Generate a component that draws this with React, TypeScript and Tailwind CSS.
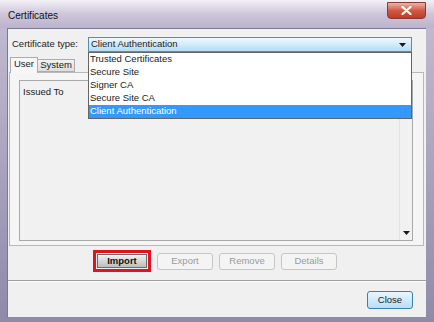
import React from 'react';

const font = { fontFamily: '"Liberation Sans", Arial, sans-serif' };

const certTypes = ['Trusted Certificates', 'Secure Site', 'Signer CA', 'Secure Site CA', 'Client Authentication'];

const DownArrow: React.FC<{ className?: string }> = ({ className }) => (
  <svg width="7" height="4" viewBox="0 0 7 4" className={className}>
    <path d="M0 0 H7 L3.5 4 Z" fill="#1a1a1a" />
  </svg>
);

interface BtnProps {
  label: string;
  disabled?: boolean;
}

const WinButton: React.FC<BtnProps> = ({ label, disabled }) => (
  <div
    className={
      disabled
        ? 'flex h-[17px] w-[56px] items-center justify-center rounded-[3px] border border-[#c4c6c8] bg-[#f4f4f4] text-[#9a9a9a]'
        : 'flex h-[17px] w-[56px] items-center justify-center rounded-[3px] border border-[#707070] bg-gradient-to-b from-[#f2f2f2] to-[#d2d2d2] text-[#111]'
    }
  >
    {label}
  </div>
);

const App: React.FC = () => {
  return (
    <div
      className="flex h-[322px] w-[434px] flex-col overflow-hidden bg-gradient-to-b from-[#c4bdd2] via-[#aaa4be] to-[#8f8aa8] pr-[8px] pb-[5px] pl-[7px] text-[9.5px] text-[#1b1b1b]"
      style={font}
    >
      {/* title bar */}
      <div className="-mr-[8px] -ml-[7px] flex h-[28px] shrink-0 items-start justify-between bg-gradient-to-b from-[#f3f1f6] via-[#cdc6da] to-[#bbb3cc] pr-[8px] pl-[8px]">
        <span className="mt-[8px] text-[10px] text-[#111]">Certificates</span>
        <div className="mt-[2px] flex h-[17px] w-[39px] items-center justify-center rounded-b-[4px] border border-[#8a3a33] bg-gradient-to-b from-[#eab3a6] via-[#d05a45] to-[#bb3b28]">
          <svg width="11" height="9" viewBox="0 0 11 9">
            <path d="M1.5 1 L9.5 8 M9.5 1 L1.5 8" stroke="#fff" strokeWidth="2.2" strokeLinecap="round" />
          </svg>
        </div>
      </div>

      {/* content */}
      <div className="relative flex flex-1 flex-col border-t border-l border-[#7c7894] bg-[#f0f0f0]">
        <div className="flex items-center pt-[8px]">
          <div className="w-[80px] pl-[4px]">Certificate type:</div>
          <div className="flex h-[15px] w-[324px] items-center justify-between border border-[#5d8bb0] bg-gradient-to-b from-[#eef7fd] via-[#d3ecfa] to-[#b3dcf4] pr-[5px] pl-[2px]">
            <span>Client Authentication</span>
            <DownArrow />
          </div>
        </div>

        {/* dropdown list */}
        <div className="absolute top-[23px] left-[80px] z-10 flex w-[324px] flex-col border border-[#646464] bg-white">
          {certTypes.map((t, i) => (
            <div
              key={t}
              className={
                i === certTypes.length - 1
                  ? 'flex h-[13px] items-center bg-[#3399ff] pl-[1px] text-white'
                  : 'flex h-[13px] items-center pl-[1px]'
              }
            >
              {t}
            </div>
          ))}
        </div>

        {/* tabs */}
        <div className="mt-[5px] ml-[2px] flex h-[15px] items-end">
          <div className="relative z-[1] -mb-[1px] flex h-[16px] w-[28px] items-center justify-center border border-b-0 border-[#a9acb2] bg-[#f7f7f7] pb-[2px]">
            User
          </div>
          <div className="flex h-[13px] w-[37px] items-center justify-center border border-l-0 border-[#a9acb2] bg-gradient-to-b from-[#f2f2f2] to-[#dedede]">
            System
          </div>
        </div>

        {/* tab panel */}
        <div className="mr-[2px] ml-[1px] flex h-[174px] flex-col border border-[#b8b8b8] bg-[#f5f5f5] pt-[7px] pr-[10px] pb-[4px] pl-[9px]">
          <div className="flex flex-1 border border-[#a9a9a9] bg-[#f1f1f1]">
            <div className="flex flex-1 flex-col">
              <div className="flex h-[22px] items-center pl-[3px]">Issued To</div>
            </div>
            <div className="flex w-[13px] flex-col items-center justify-end border-l border-[#e2e2e2] pb-[5px]">
              <DownArrow />
            </div>
          </div>
        </div>

        {/* action buttons */}
        <div className="mt-[4px] flex justify-center gap-[6px] pr-[4px]">
          <div className="flex h-[22px] w-[58px] items-center justify-center border-[3px] border-[#e0141e]">
            <div className="flex h-[14px] w-[50px] items-center justify-center border border-[#6d6d6d] bg-gradient-to-b from-[#f0f0f0] to-[#bdbdbd] font-bold text-[#111]">
              Import
            </div>
          </div>
          <div className="flex items-center gap-[6px]">
            <WinButton label="Export" disabled />
            <WinButton label="Remove" disabled />
            <WinButton label="Details" disabled />
          </div>
        </div>

        {/* separator */}
        <div className="mt-[8px] h-[2px] border-t border-b border-t-[#9f9f9f] border-b-white" />

        <div className="mt-[9px] flex justify-end pr-[13px]">
          <div className="flex h-[18px] w-[46px] items-center justify-center rounded-[3px] border border-[#3c7fb1] bg-gradient-to-b from-[#eaf6fd] to-[#b6dff6]">
            Close
          </div>
        </div>
      </div>
    </div>
  );
};

export default App;
